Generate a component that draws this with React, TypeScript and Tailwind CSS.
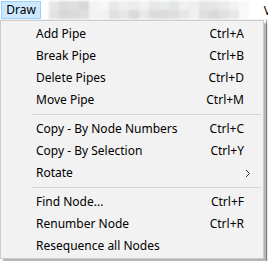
import React from "react";

type Item =
  | { type: "sep" }
  | { type: "item"; label: string; shortcut?: string; submenu?: boolean };

const items: Item[] = [
  { type: "item", label: "Add Pipe", shortcut: "Ctrl+A" },
  { type: "item", label: "Break Pipe", shortcut: "Ctrl+B" },
  { type: "item", label: "Delete Pipes", shortcut: "Ctrl+D" },
  { type: "item", label: "Move Pipe", shortcut: "Ctrl+M" },
  { type: "sep" },
  { type: "item", label: "Copy - By Node Numbers", shortcut: "Ctrl+C" },
  { type: "item", label: "Copy - By Selection", shortcut: "Ctrl+Y" },
  { type: "item", label: "Rotate", submenu: true },
  { type: "sep" },
  { type: "item", label: "Find Node...", shortcut: "Ctrl+F" },
  { type: "item", label: "Renumber Node", shortcut: "Ctrl+R" },
  { type: "item", label: "Resequence all Nodes" },
];

const topRow = ["#e6e6e6", "#dcdcdc", "#dedede", "#d8d8da", "#f4f4f4", "#f8f8f8", "#e8e8e8", "#f0f0f0", "#ececec", "#f2f2f2", "#e8e8ea", "#eaecec", "#e4e6e6", "#f0f0f2", "#eeeeee", "#e4e4e4", "#e6e6e6", "#eaeaea", "#f2f2f2", "#f8f8f8"];
const botRow = ["#e2e2e2", "#d8d8d8", "#dadada", "#dedede", "#f2f2f2", "#f2f2f2", "#e0e0e0", "#e6e6e6", "#dadada", "#e8e8e8", "#dcdcdc", "#dadcdc", "#dedede", "#e6e6e8", "#f2f1ee", "#dedede", "#d8d8da", "#e0e0e0", "#e8e8e8", "#f8f8f8"];

export default function App() {
  return (
    <div
      className="relative w-[268px] h-[261px] bg-white overflow-hidden text-[12px] text-black"
      style={{ fontFamily: '"Noto Sans", "Open Sans", sans-serif' }}
    >
      {/* menu bar */}
      <div className="flex h-[20px] items-stretch bg-white border-b border-[#f0f0f0]">
        <div className="ml-[1px] mt-[1px] h-[18px] w-[40px] flex items-center justify-center bg-[#cce8ff] border border-[#99d1ff]">
          Draw
        </div>
        <div className="ml-[8px] mt-[1px] flex flex-col blur-[1px]">
          <div className="flex">
            {topRow.map((c, i) => (
              <div key={i} className="w-[10px] h-[9px]" style={{ background: c }} />
            ))}
          </div>
          <div className="flex">
            {botRow.map((c, i) => (
              <div key={i} className="w-[10px] h-[9px]" style={{ background: c }} />
            ))}
          </div>
        </div>
        <div className="ml-auto mr-[-3px] mt-[2px]">V</div>
      </div>
      <div className="absolute right-[1px] top-[20px] w-px h-[241px] bg-[#a0a0a0]" />

      {/* dropdown */}
      <div className="absolute left-0 top-[20px] w-[264px] bg-[#f2f2f2] border border-[#cccccc] pt-[2px] pb-[1px] shadow-[3px_3px_2px_rgba(0,0,0,0.3)]">
        {items.map((it, i) =>
          it.type === "sep" ? (
            <div key={i} className="h-[7px] flex items-center pl-[31px] pr-[2px]">
              <div className="h-px w-full bg-[#d7d7d7]" />
            </div>
          ) : (
            <div key={i} className="h-[22px] flex items-center pl-[35px] pr-[19px]">
              <span className="flex-1">{it.label}</span>
              {it.shortcut && <span>{it.shortcut}</span>}
              {it.submenu && (
                <svg width="6" height="9" viewBox="0 0 6 9" className="mr-[-7px]">
                  <path d="M1 1 L4.5 4.5 L1 8" fill="none" stroke="#333" strokeWidth="1" />
                </svg>
              )}
            </div>
          )
        )}
      </div>
    </div>
  );
}
